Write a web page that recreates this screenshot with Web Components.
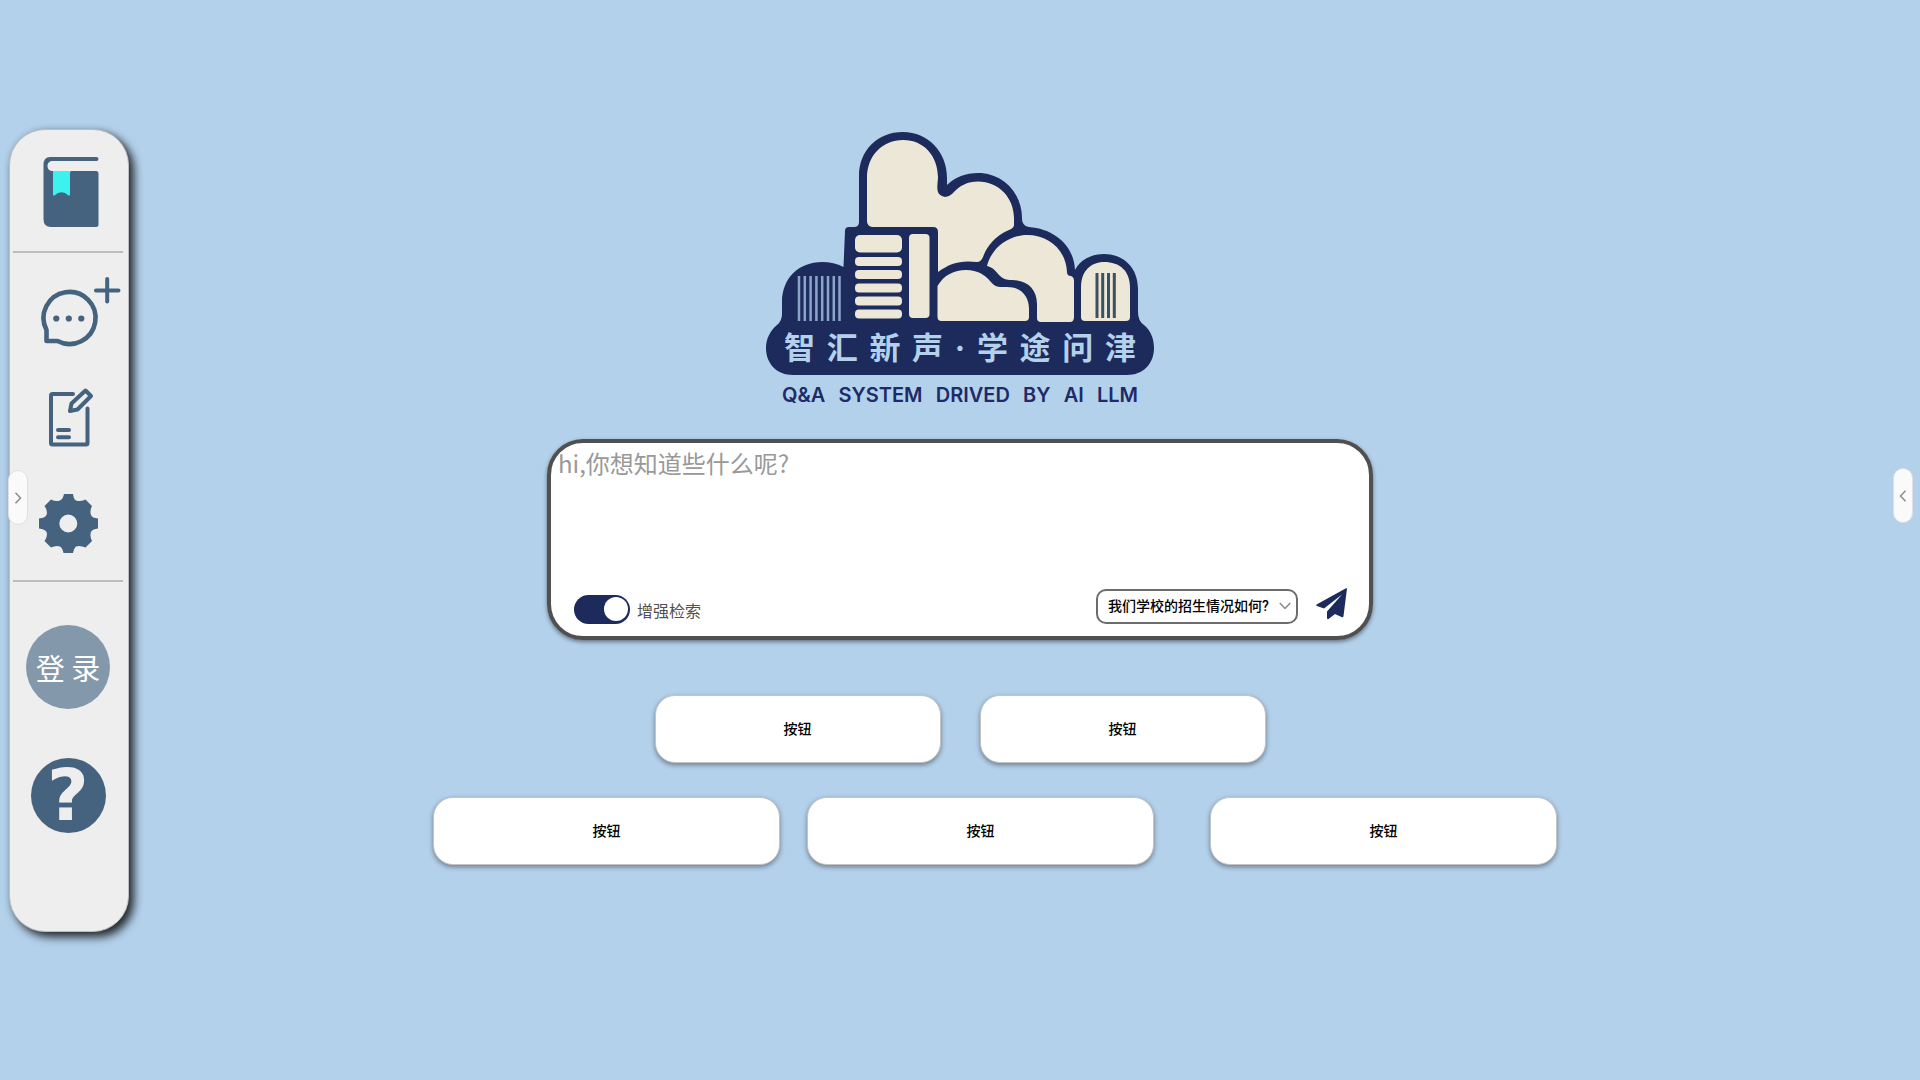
<!DOCTYPE html>
<html lang="zh-CN">
<head>
<meta charset="utf-8">
<title>智汇新声·学途问津</title>
<style>
  body { margin: 0; background: #b4d1eb; font-family: "Noto Sans CJK SC", sans-serif; }
</style>
</head>
<body>
<qa-app></qa-app>

<template id="t-app">
  <style>
    :host { display: grid; grid-template-columns: 120px minmax(0, 1fr) 120px; min-height: 100vh; box-sizing: border-box; padding: 129px 9px 40px; align-items: start; position: relative; }
    main { display: flex; flex-direction: column; align-items: center; padding-top: 1px; }
    qa-composer { width: 100%; max-width: 826px; margin-top: 34px; }
    .row { display: flex; justify-content: center; box-sizing: border-box; width: 100%; }
    .first { gap: 39px; margin-top: 55px; }
    .second { gap: 27px; margin-top: 34px; padding-left: 70px; }
    .first qa-suggestion { flex: 0 1 286px; }
    .second qa-suggestion { flex: 0 1 347px; }
    .second qa-suggestion:last-child { margin-left: 29px; }
    qa-drawer-tab { position: absolute; left: 8px; top: 470px; }
    qa-drawer-tab[side="right"] { left: auto; right: 7px; top: 468px; }
  </style>
  <qa-sidebar></qa-sidebar>
  <main>
    <qa-logo></qa-logo>
    <qa-composer></qa-composer>
    <div class="row first">
      <qa-suggestion>按钮</qa-suggestion>
      <qa-suggestion>按钮</qa-suggestion>
    </div>
    <div class="row second">
      <qa-suggestion>按钮</qa-suggestion>
      <qa-suggestion>按钮</qa-suggestion>
      <qa-suggestion>按钮</qa-suggestion>
    </div>
  </main>
  <qa-drawer-tab side="left"></qa-drawer-tab>
  <qa-drawer-tab side="right"></qa-drawer-tab>
</template>

<template id="t-sidebar">
  <style>
    :host { display: block; box-sizing: border-box; border: 1px solid #bdbdbd; border-radius: 36px; background: #eee; padding-bottom: 98px; box-shadow: 5px 5px 10px rgba(0,0,0,.8), 0 0 6px rgba(0,0,0,.12); }
    nav { display: flex; flex-direction: column; align-items: center; padding-right: 2px; }
    hr { width: 110px; height: 2px; margin: 0; border: 0; background: #bdbdbd; }
    button { display: block; padding: 0; border: 0; background: none; cursor: pointer; font-family: inherit; }
    svg { display: block; width: 110px; fill: none; stroke: #45637f; stroke-linecap: round; stroke-linejoin: round; }
    .tools { display: flex; flex-direction: column; gap: 26px; padding: 20px 0 15px; }
    .account { display: flex; flex-direction: column; align-items: center; gap: 49px; padding-top: 43px; }
    .login { width: 84px; height: 84px; border-radius: 50%; background: #8498ac; color: #fff; font-size: 29px; line-height: 84px; white-space: nowrap; }
    .help { width: 75px; height: 75px; border-radius: 50%; background: #45637f; color: #eee; font: bold 72px/75px "DejaVu Sans", sans-serif; }
  </style>
  <nav>
    <button aria-label="知识库">
      <svg viewBox="13 130 110 121" height="121" stroke="none">
        <path stroke="none" fill="#45637f" d="M50 157H96.500a2 2 0 0 1 0 4H53C49.500 161 47.500 163 47.500 166C47.500 169 49.500 171 53 171H96Q98.500 171 98.500 173.500V224.500Q98.500 227 96 227H51Q43.500 227 43.500 219V165Q43.500 157 50 157Z"/>
        <path stroke="none" fill="#3cf1ee" d="M53 171H71Q70 172 70 173V194.500Q70 196 68.500 195.500Q61.500 189 54.500 195.500Q53 196 53 194.500Z"/>
      </svg>
    </button>
    <hr>
    <div class="tools">
      <button aria-label="新建对话">
        <svg viewBox="13 273 110 80" height="80">
          <path stroke-width="4.600" d="M46.500 341V330A26 26 0 1 1 57.500 341Z"/>
          <path stroke-width="4" d="M96 290.500H118.500M107.200 279V301.500"/>
          <g fill="#45637f" stroke="none"><circle cx="56.300" cy="318.500" r="3.100"/><circle cx="68.800" cy="318.500" r="3.100"/><circle cx="81.300" cy="318.500" r="3.100"/></g>
        </svg>
      </button>
      <button aria-label="编辑笔记">
        <svg viewBox="13 379 110 80" height="80" stroke-width="4">
          <path d="M73 394H52.500Q51 394 51 395.500V443Q51 444.500 52.500 444.500H86Q87.500 444.500 87.500 443V408.500M58 430H69M58 437.200H69"/>
          <path d="M85.500 390.500L91 396L77.500 409.500L70 411L71.500 403.500Z"/>
        </svg>
      </button>
      <button aria-label="设置">
        <svg viewBox="13 485 110 80" height="80">
          <path stroke="none" fill="#45637f" fill-rule="evenodd" d="M64 494H73Q73.500 499 76 500.500Q80 502 85.500 499.500L92 506Q89.500 511 91 515Q92 518 98 518.500V528.500Q92 529 91 532Q89.500 536 92 541L85.500 547.500Q80 545 76 546.500Q74 548 73 553H63.500Q62.500 548 60 546.500Q56 545 51 547.500L44.500 541Q48 536 46.500 532Q45 529 39 528.500V518.500Q45 518 46.500 515Q48 511 44.500 506L51 499.500Q56 502 60 500.500Q63 499 64 494ZM68.300 514.500A9 9 0 1 0 68.300 532.500A9 9 0 1 0 68.300 514.500Z"/>
        </svg>
      </button>
    </div>
    <hr>
    <div class="account">
      <button class="login">登 录</button>
      <button class="help" aria-label="帮助">?</button>
    </div>
  </nav>
</template>

<template id="t-tab">
  <style>
    :host { display: block; }
    button { display: grid; place-items: center; box-sizing: border-box; width: 20px; height: 55px; padding: 0; border: 1px solid #e0e0e0; border-radius: 10px; background: #fafafa; cursor: pointer; }
    svg { display: block; fill: none; stroke: #8c8c8c; stroke-width: 1.500; }
    :host([side="right"]) svg { transform: scaleX(-1); }
  </style>
  <button aria-label="展开面板"><svg width="8" height="12" viewBox="0 0 8 12"><path d="M1.500 .8L6.500 6L1.500 11.200"/></svg></button>
</template>

<template id="t-logo">
  <style>
    :host { display: block; width: 390px; max-width: 100%; }
    .mark { display: grid; }
    svg, .name { grid-area: 1 / 1; }
    svg { display: block; width: 100%; }
    .name { align-self: end; margin: 0 19px 7px; color: #b4d1eb; font: bold 31px/40px Inter, "Noto Sans CJK SC", sans-serif; text-align-last: justify; white-space: nowrap; }
    .tag { margin: 10px 17px 0; color: #202a66; font: 600 20px/20px Inter, sans-serif; text-align-last: justify; white-space: nowrap; }
  </style>
  <div class="mark">
    <svg viewBox="765 130 390 245" aria-hidden="true">
      <g fill="#1c2b5c">
        <path d="M859 227V176C859 150 878 132 903 132C928 132 947 152 947 178V185C955 177 966 173 978 173C1003 173 1022 193 1022 218C1022 223 1024 226 1029 227C1055 229 1074 246 1075 270C1080 260 1091 254 1104 254C1124 254 1138 268 1138 289V312Q1138 321 1144 325C1151 331 1154 339 1154 348C1154 364 1143 375 1127 375H793C777 375 766 364 766 348C766 339 770 331 777 325Q782 321 782 314V302C782 278 799 262 822 262Q834 262 843.500 267L845 231Q845 227 849 227H854Q859 227 859 222Z"/>
      </g>
      <g fill="#ece7d6">
        <path d="M872 227Q867 226 867 221V178C867 155 883 140 903 140C924 140 938 156 938 178C937 189 937 190 939 194Q945 200 952 194C960 185 968 181.500 978 181.500C999 181.500 1014 198 1014 218V225Q1014 228 1009 230C995 236 987 246 983 257Q981 262 977 262C961 260 950 263 938 272V232Q938 227 933 227Z"/>
        <path d="M987 266C991 249 1008 235 1027 235C1049 235 1066 250 1067 272Q1067 276 1071 276Q1074 277 1074 281V317Q1074 322 1070 322H1041Q1037 322 1037 318V304C1037 289 1027 280 1012 280C1006 280 1003 279 999 275C995 270 992 267 987 266Z"/>
        <path d="M937.500 286C944 275 954 270 966 270C978 270 985 275 990 281C996 288 998 287 1007 287C1021 287 1029 296 1029 309V317Q1029 321 1025 321H941.500Q937.500 321 937.500 317Z"/>
        <path d="M1081 317V287C1081 271 1091 262 1104 262C1120 262 1130 271 1130 288V317Q1130 321 1126 321H1085Q1081 321 1081 317Z"/>
        <rect x="855" y="235" width="47" height="17.500" rx="5"/>
        <rect x="855" y="257" width="47" height="9" rx="4"/>
        <rect x="855" y="270" width="47" height="9" rx="4"/>
        <rect x="855" y="283.500" width="47" height="9" rx="4"/>
        <rect x="855" y="296.500" width="47" height="9" rx="4"/>
        <rect x="855" y="309.500" width="47" height="9" rx="4"/>
        <rect x="909" y="234" width="20.500" height="84" rx="4"/>
      </g>
      <path stroke="#8aa5ca" stroke-width="2.500" d="M799 276V321M804.800 276V321M810.600 276V321M816.400 276V321M822.200 276V321M828 276V321M833.800 276V321M839.500 276V321"/>
      <path stroke="#3b5160" stroke-width="3" d="M1097 273V318M1102.700 273V318M1108.500 273V318M1114.300 273V318"/>
    </svg>
    <div class="name">智汇新声·学途问津</div>
  </div>
  <div class="tag">Q&amp;A SYSTEM DRIVED BY AI LLM</div>
</template>

<template id="t-composer">
  <style>
    :host { display: block; border-radius: 36px; box-shadow: 0 2px 4px rgba(0,0,0,.45); }
    form { display: flex; flex-direction: column; box-sizing: border-box; height: 201px; margin: 0; border: 4px solid #505050; border-radius: 36px; background: #fff; overflow: hidden; }
    textarea { flex: 1; min-height: 0; padding: 2px 7px; border: 0; outline: 0; resize: none; background: transparent; color: #333; font: 24px/36px "Noto Sans CJK SC", sans-serif; }
    textarea::placeholder { color: #999; opacity: 1; }
    .bar { display: flex; align-items: center; padding: 0 21px 9px 23px; height: 36px; }
    label { display: flex; align-items: center; gap: 7px; color: #505050; font-size: 16px; line-height: 20px; }
    label span { padding-top: 2px; }
    input { appearance: none; display: grid; align-items: center; justify-items: end; box-sizing: border-box; width: 56px; height: 29px; margin: 0; padding: 2px; border-radius: 15px; background: #1c2b5c; }
    input::before { content: ""; width: 24px; height: 24px; border-radius: 50%; background: #fff; }
    input:not(:checked) { justify-items: start; background: #999; }
    .pick { display: grid; align-items: center; margin: 0 18px 6px auto; }
    select { grid-area: 1 / 1; appearance: none; box-sizing: border-box; width: 202px; height: 35px; padding: 0 10px; border: 2px solid #6c6c6c; border-radius: 10px; background: #fff; color: #000; font: 500 14px/20px Roboto, "Noto Sans CJK SC", sans-serif; }
    .pick svg { grid-area: 1 / 1; justify-self: end; margin-right: 7px; pointer-events: none; fill: none; stroke: #888; stroke-width: 1.500; }
    button { display: block; padding: 0; margin-bottom: 10px; border: 0; background: none; cursor: pointer; }
    button svg { display: block; fill: #1c2b5c; }
  </style>
  <form>
    <textarea aria-label="问题" placeholder="hi,你想知道些什么呢?"></textarea>
    <div class="bar">
      <label><input type="checkbox" checked><span>增强检索</span></label>
      <div class="pick">
        <select aria-label="常见问题"><option>我们学校的招生情况如何?</option></select>
        <svg width="12" height="8" viewBox="0 0 12 8"><path d="M.8 1L6 6.500L11.200 1"/></svg>
      </div>
      <button type="button" aria-label="发送">
        <svg width="32" height="32" viewBox="0 0 32 32"><path d="M31 .5L27.500 28Q27.300 30 25.500 29L19 26L12.500 31Q11 31.500 11 30V23.500L26 6.500L8 20.500L1 18Q-.5 17.200 1 16.200L29.500 .5Q31 0 31 .5Z"/></svg>
      </button>
    </div>
  </form>
</template>

<template id="t-suggestion">
  <style>
    :host { display: block; }
    button { box-sizing: border-box; display: block; width: 100%; height: 68px; padding: 0 16px 2px; border: 1px solid #c4c4c4; border-radius: 20px; background: #fff; box-shadow: 0 2px 5px rgba(0,0,0,.4); color: #000; font: 500 14px/20px "Noto Sans CJK SC", sans-serif; cursor: pointer; }
  </style>
  <button><slot></slot></button>
</template>

<script>
  class TemplateElement extends HTMLElement {
    constructor() {
      super();
      const template = document.getElementById(this.constructor.template);
      this.attachShadow({ mode: "open" }).append(template.content.cloneNode(true));
    }
  }
  const define = (name, template) =>
    customElements.define(name, class extends TemplateElement { static template = template; });

  define("qa-sidebar", "t-sidebar");
  define("qa-drawer-tab", "t-tab");
  define("qa-logo", "t-logo");
  define("qa-composer", "t-composer");
  define("qa-suggestion", "t-suggestion");
  define("qa-app", "t-app");
</script>
</body>
</html>
